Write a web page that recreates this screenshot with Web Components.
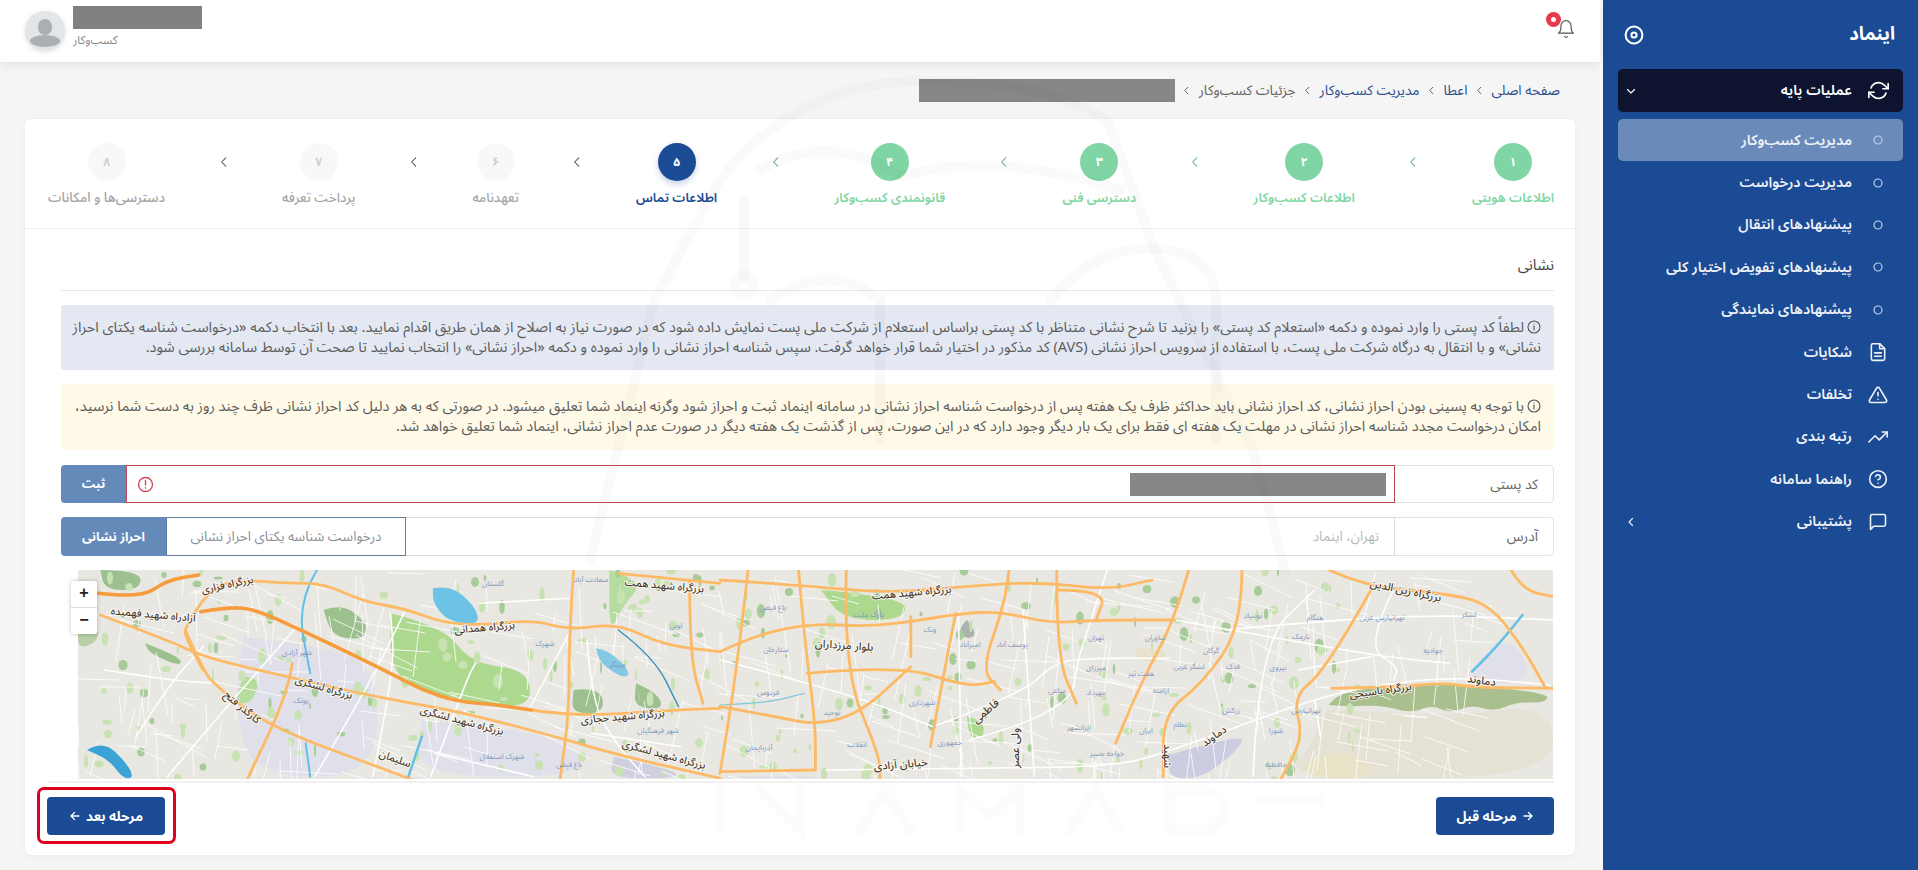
<!DOCTYPE html>
<html lang="fa" dir="rtl">
<head>
<meta charset="utf-8">
<title>اینماد</title>
<style>
  html, body { margin: 0; height: 870px; overflow: hidden; background: #f5f5f5; }
  body { font-family: "Noto Sans Arabic", "Vazirmatn", "DejaVu Sans", sans-serif; font-size: 13px; color: #555; }
</style>
</head>
<body>
<app-shell>
  <side-bar slot="side">
    <side-item icon="refresh" open>عملیات پایه</side-item>
    <side-item icon="dot" active>مدیریت کسب‌وکار</side-item>
    <side-item icon="dot">مدیریت درخواست</side-item>
    <side-item icon="dot">پیشنهادهای انتقال</side-item>
    <side-item icon="dot">پیشنهادهای تفویض اختیار کلی</side-item>
    <side-item icon="dot">پیشنهادهای نمایندگی</side-item>
    <side-item icon="file">شکایات</side-item>
    <side-item icon="warn">تخلفات</side-item>
    <side-item icon="trend">رتبه بندی</side-item>
    <side-item icon="help">راهنما سامانه</side-item>
    <side-item icon="chat" more>پشتیبانی</side-item>
  </side-bar>
  <top-bar></top-bar>
  <crumb-trail></crumb-trail>
  <main-card>
    <step-bar slot="steps">
      <step-item num="۱" state="done">اطلاعات هویتی</step-item>
      <step-item num="۲" state="done">اطلاعات کسب‌وکار</step-item>
      <step-item num="۳" state="done">دسترسی فنی</step-item>
      <step-item num="۴" state="done">قانونمندی کسب‌وکار</step-item>
      <step-item num="۵" state="current">اطلاعات تماس</step-item>
      <step-item num="۶">تعهدنامه</step-item>
      <step-item num="۷">پرداخت تعرفه</step-item>
      <step-item num="۸" last>دسترسی‌ها و امکانات</step-item>
    </step-bar>
    <info-alert kind="info">لطفاً کد پستی را وارد نموده و دکمه «استعلام کد پستی» را بزنید تا شرح نشانی متناظر با کد پستی براساس استعلام از شرکت ملی پست نمایش داده شود که در صورت نیاز به اصلاح از همان طریق اقدام نمایید. بعد با انتخاب دکمه «درخواست شناسه یکتای احراز<br>نشانی» و با انتقال به درگاه شرکت ملی پست، با استفاده از سرویس احراز نشانی (AVS) کد مذکور در اختیار شما قرار خواهد گرفت. سپس شناسه احراز نشانی را وارد نموده و دکمه «احراز نشانی» را انتخاب نمایید تا صحت آن توسط سامانه بررسی شود.</info-alert>
    <info-alert kind="warn">با توجه به پسینی بودن احراز نشانی، کد احراز نشانی باید حداکثر ظرف یک هفته پس از درخواست شناسه احراز نشانی در سامانه اینماد ثبت و احراز شود وگرنه اینماد شما تعلیق میشود. در صورتی که به هر دلیل کد احراز نشانی ظرف چند روز به دست شما نرسید،<br>امکان درخواست مجدد شناسه احراز نشانی در مهلت یک هفته ای فقط برای یک بار دیگر وجود دارد که در این صورت، پس از گذشت یک هفته دیگر در صورت عدم احراز نشانی، اینماد شما تعلیق خواهد شد.</info-alert>
    <form-row label="کد پستی" error redacted>
      <form-btn>ثبت</form-btn>
    </form-row>
    <form-row label="آدرس" value="تهران، اینماد">
      <form-btn outline>درخواست شناسه یکتای احراز نشانی</form-btn>
      <form-btn wide>احراز نشانی</form-btn>
    </form-row>
    <tehran-map></tehran-map>
    <nav-button slot="prev" dir-arrow="right">مرحله قبل</nav-button>
    <nav-button slot="next" dir-arrow="left" marked>مرحله بعد</nav-button>
  </main-card>
  <water-mark slot="over"></water-mark>
</app-shell>

<script>
const ICONS = {
  refresh: '<polyline points="23 4 23 10 17 10"/><polyline points="1 20 1 14 7 14"/><path d="M3.51 9a9 9 0 0 1 14.85-3.36L23 10M1 14l4.64 4.36A9 9 0 0 0 20.49 15"/>',
  file: '<path d="M14 2H6a2 2 0 0 0-2 2v16a2 2 0 0 0 2 2h12a2 2 0 0 0 2-2V8z"/><polyline points="14 2 14 8 20 8"/><line x1="16" y1="13" x2="8" y2="13"/><line x1="16" y1="17" x2="8" y2="17"/>',
  warn: '<path d="M10.29 3.86L1.82 18a2 2 0 0 0 1.71 3h16.94a2 2 0 0 0 1.71-3L13.71 3.86a2 2 0 0 0-3.42 0z"/><line x1="12" y1="9" x2="12" y2="13"/><line x1="12" y1="17" x2="12.01" y2="17"/>',
  trend: '<polyline points="23 6 13.5 15.5 8.5 10.5 1 18"/><polyline points="17 6 23 6 23 12"/>',
  help: '<circle cx="12" cy="12" r="10"/><path d="M9.09 9a3 3 0 0 1 5.83 1c0 2-3 3-3 3"/><line x1="12" y1="17" x2="12.01" y2="17"/>',
  chat: '<path d="M21 15a2 2 0 0 1-2 2H7l-4 4V5a2 2 0 0 1 2-2h14a2 2 0 0 1 2 2z"/>',
  bell: '<path d="M18 8A6 6 0 0 0 6 8c0 7-3 9-3 9h18s-3-2-3-9"/><path d="M13.73 21a2 2 0 0 1-3.46 0"/>'
};
const icon = (name, size, sw = 2) => `<svg width="${size}" height="${size}" viewBox="0 0 24 24" fill="none" stroke="currentColor" stroke-width="${sw}" stroke-linecap="round" stroke-linejoin="round">${ICONS[name]}</svg>`;
const chevron = (dir, size, sw = 2) => `<svg width="${size}" height="${size}" viewBox="0 0 24 24" fill="none" stroke="currentColor" stroke-width="${sw}" stroke-linecap="round" stroke-linejoin="round"><polyline points="${dir === 'left' ? '15 5 8 12 15 19' : dir === 'down' ? '5 9 12 16 19 9' : '9 5 16 12 9 19'}"/></svg>`;

class Base extends HTMLElement {
  constructor() {
    super();
    this.attachShadow({ mode: 'open' });
  }
  connectedCallback() {
    this.shadowRoot.innerHTML = this.render();
  }
}

class AppShell extends Base {
  render() {
    return `<style>
      :host { display: grid; grid-template-columns: 318px 1600px; height: 870px; position: relative; }
      .main { display: flex; flex-direction: column; min-width: 0; height: 870px; }
    </style>
    <slot name="side"></slot>
    <div class="main"><slot></slot></div>
    <slot name="over"></slot>`;
  }
}

class SideBar extends Base {
  render() {
    return `<style>
      :host { display: block; height: 870px; background: #1a4b94; border-left: 3px solid #fbfbfb; box-sizing: border-box; color: #fff; }
      header { display: flex; align-items: center; justify-content: space-between; height: 69px; padding: 0 23px 0 21px; box-sizing: border-box; }
      h1 { margin: 0; font-size: 18.5px; font-weight: 700; }
      nav { display: flex; flex-direction: column; margin: 0 15px 0 15px; }
      svg { display: block; }
    </style>
    <header><h1>اینماد</h1>
      <svg width="20" height="20" viewBox="0 0 20 20" fill="none" stroke="#fff" stroke-width="2"><circle cx="10" cy="10" r="8.4"/><circle cx="10" cy="10" r="2.6"/></svg>
    </header>
    <nav><slot></slot></nav>`;
  }
}

class SideItem extends Base {
  render() {
    const name = this.getAttribute('icon');
    const ic = name === 'dot'
      ? '<svg width="10" height="10" viewBox="0 0 10 10" fill="none" stroke="#bcd0ea" stroke-width="1.2"><circle cx="5" cy="5" r="4"/></svg>'
      : icon(name, name === 'refresh' ? 21 : 20, 1.9);
    let tail = '';
    if (this.hasAttribute('open')) tail = chevron('down', 12, 2.2);
    if (this.hasAttribute('more')) tail = chevron('left', 12, 2.2);
    return `<style>
      :host { display: flex; align-items: center; height: 42.4px; padding: 0 14px 0 7px; box-sizing: border-box; border-radius: 5px; font-size: 14.4px; font-weight: 600; color: #eef2f8; white-space: nowrap; }
      :host([open]) { height: 43px; background: #0e1430; color: #fff; margin-bottom: 7px; }
      :host([active]) { background: #6a8bba; }
      .ic { width: 22px; height: 22px; display: flex; align-items: center; justify-content: center; margin-left: 15px; flex: none; }
      .tail { margin-right: auto; display: flex; }
      svg { display: block; }
    </style>
    <span class="ic">${ic}</span><slot></slot><span class="tail">${tail}</span>`;
  }
}

class TopBar extends Base {
  render() {
    return `<style>
      :host { display: flex; align-items: center; justify-content: space-between; flex: none; height: 62px; background: #fff; box-shadow: 0 2px 10px rgba(0,0,0,.09); padding: 0 24px 0 25px; box-sizing: border-box; position: relative; }
      .bell { position: relative; width: 20px; height: 24px; color: #555; display: flex; margin-top: -2px; }
      .badge { position: absolute; top: -6px; left: -10px; width: 15px; height: 15px; border-radius: 50%; background: #e8394d; }
      .badge::after { content: ""; position: absolute; inset: 5px; background: #fff; border-radius: 50%; }
      .who { display: flex; align-items: center; gap: 8px; direction: ltr; }
      .avatar { width: 40px; height: 40px; border-radius: 50%; background: #e3e6e8; box-shadow: 0 1px 5px rgba(0,0,0,.12); overflow: hidden; }
      .name { width: 129px; height: 23px; background: #7f8280; margin-bottom: 3px; }
      .role { font-size: 11.5px; color: #888; direction: rtl; text-align: left; line-height: 16px; height: 16px; }
      .txt { margin-top: -9px; }
    </style>
    <div class="bell">${icon('bell', 22, 1.4)}<span class="badge"></span></div>
    <div class="who">
      <div class="avatar"><svg width="40" height="40" viewBox="0 0 40 40" fill="#a9afb2"><rect x="13" y="8" width="14" height="16" rx="7"/><ellipse cx="20" cy="30" rx="15" ry="6"/></svg></div>
      <div class="txt"><div class="name"></div><div class="role">کسب‌وکار</div></div>
    </div>`;
  }
}

class CrumbTrail extends Base {
  render() {
    const sep = `<span class="sep">${chevron('left', 11, 2)}</span>`;
    return `<style>
      :host { display: flex; align-items: center; flex: none; height: 57px; padding: 0 40px 0 0; box-sizing: border-box; font-size: 13.8px; color: #2a4f8f; white-space: nowrap; }
      .sep { margin: 0 6.5px; color: #555; display: flex; }
      .cur { color: #666; }
      .bar { width: 256px; height: 23px; background: #858886; }
    </style>
    <span>صفحه اصلی</span>${sep}<span>اعطا</span>${sep}<span>مدیریت کسب‌وکار</span>${sep}<span class="cur">جزئیات کسب‌وکار</span>${sep}<span class="bar"></span>`;
  }
}

class MainCard extends Base {
  render() {
    return `<style>
      :host { display: block; flex: none; width: 1550px; height: 736px; margin: 0 25px; background: #fff; border-radius: 6px; box-shadow: 0 1px 6px rgba(0,0,0,.05); }
      .body { padding: 0 21px 0 21px; }
      .title { height: 62px; line-height: 72px; margin: 0 0 14px 15px; border-bottom: 1px solid #e8e8e8; font-size: 15px; color: #444; box-sizing: border-box; }
      .content { margin-left: 15px; display: flex; flex-direction: column; }
      .foot { display: flex; justify-content: space-between; margin-top: 2px; border-top: 2px solid #f1f1f1; padding-top: 14px; margin-left: 1px; }
    </style>
    <slot name="steps"></slot>
    <div class="body">
      <div class="title">نشانی</div>
      <div class="content"><slot></slot></div>
      <div class="foot"><slot name="prev"></slot><slot name="next"></slot></div>
    </div>`;
  }
}

class StepBar extends Base {
  render() {
    return `<style>
      :host { display: flex; justify-content: space-between; height: 110px; padding: 24px 21px 0 23px; box-sizing: border-box; border-bottom: 1px solid #f0f0f0; }
    </style>
    <slot></slot>`;
  }
}

class StepItem extends Base {
  render() {
    return `<style>
      :host { display: contents; }
      .step { display: flex; flex-direction: column; align-items: center; white-space: nowrap; }
      .num { width: 38px; height: 38px; border-radius: 50%; display: flex; align-items: center; justify-content: center; font-size: 12px; font-weight: 700; background: #f8f8f8; color: #cfcfcf; }
      .lab { margin-top: 7px; font-size: 13.1px; line-height: 20px; color: #a4a4a4; font-weight: 500; }
      :host([last]) .lab { font-size: 13.4px; }
      .done .num { background: #7fd6a4; color: #fff; }
      .done .lab { color: #7fd6a4; font-weight: 600; font-size: 12.9px; }
      .current .num { background: #1a4b94; color: #fff; box-shadow: 0 3px 6px rgba(26,75,148,.25); }
      .current .lab { color: #1a4b94; font-weight: 600; font-size: 12.9px; }
      .chev { display: flex; align-items: center; height: 38px; color: #555; }
      .chev.done { color: #62b096; }
    </style>
    <div class="step ${this.getAttribute('state') || ''}">
      <div class="num">${this.getAttribute('num')}</div>
      <div class="lab"><slot></slot></div>
    </div>
    ${this.hasAttribute('last') ? '' : `<div class="chev ${this.getAttribute('state') === 'done' ? 'done' : ''}">${chevron('left', 14, 1.8)}</div>`}`;
  }
}

class InfoAlert extends Base {
  render() {
    return `<style>
      :host { display: block; box-sizing: border-box; height: 65px; padding: 12.5px 13px 0 5px; margin-bottom: 14px; border-radius: 3px; font-size: 14.5px; line-height: 20px; color: #5c5c5c; white-space: nowrap; overflow: hidden; }
      :host([kind=info]) { background: #e3e8f2; }
      :host([kind=warn]) { background: #fff9e8; height: 66px; margin-bottom: 15px; }
      .i { display: inline-block; vertical-align: -2px; margin-left: 3px; color: #555; line-height: 0; }
    </style>
    <span class="i"><svg width="14" height="14" viewBox="0 0 14 14" fill="none" stroke="currentColor" stroke-width="1.1" stroke-linecap="round"><circle cx="7" cy="7" r="6"/><line x1="7" y1="6.2" x2="7" y2="10"/><line x1="7" y1="4" x2="7" y2="4.1"/></svg></span><slot></slot>`;
  }
}

class FormRow extends Base {
  render() {
    const err = this.hasAttribute('error');
    return `<style>
      :host { display: flex; height: 39px; margin-bottom: 14px; font-size: 13.8px; }
      :host([error]) { height: 38px; }
      .lab { width: 159px; flex: none; box-sizing: border-box; padding-right: 15px; display: flex; align-items: center; border: 1px solid #e4e4e4; border-left: none; border-radius: 0 4px 4px 0; color: #666; }
      .input { flex: 1; min-width: 0; display: flex; align-items: center; box-sizing: border-box; border: 1px solid #dcdcdc; border-left: none; padding-right: 15px; color: #b8b8b8; font-size: 13.5px; position: relative; }
      :host([error]) .input { border: 1px solid #c4485a; padding-right: 8px; }
      .bar { width: 256px; height: 23px; background: #858886; }
      .alert { margin-right: auto; margin-left: 10px; display: flex; color: #cf4a5c; }
      .btns { display: flex; flex: none; }
    </style>
    <div class="lab">${this.getAttribute('label')}</div>
    <div class="input">
      ${this.hasAttribute('redacted') ? '<span class="bar"></span>' : ''}${this.getAttribute('value') || ''}
      ${err ? `<span class="alert"><svg width="17" height="17" viewBox="0 0 17 17" fill="none" stroke="currentColor" stroke-width="1.4" stroke-linecap="round"><circle cx="8.5" cy="8.5" r="7"/><line x1="8.5" y1="4.6" x2="8.5" y2="9"/><line x1="8.5" y1="11.8" x2="8.5" y2="12"/></svg></span>` : ''}
    </div>
    <div class="btns"><slot></slot></div>`;
  }
}

class FormBtn extends Base {
  render() {
    return `<style>
      :host { display: flex; align-items: center; justify-content: center; width: 65px; box-sizing: border-box; background: #648aba; color: #fff; font-weight: 700; font-size: 12.5px; border-radius: 4px 0 0 4px; white-space: nowrap; }
      :host([wide]) { width: 105px; }
      :host([outline]) { width: 240px; background: #fff; color: #8a8f96; font-weight: 400; font-size: 13.5px; border: 1px solid #5f7f9e; border-radius: 0; }
    </style><slot></slot>`;
  }
}

class NavButton extends Base {
  render() {
    const left = this.getAttribute('dir-arrow') === 'left';
    const arrow = `<svg width="12" height="12" viewBox="0 0 12 12" fill="none" stroke="currentColor" stroke-width="1.3" stroke-linecap="round" stroke-linejoin="round"><path d="${left ? 'M10 6H2M5.5 2.5L2 6l3.5 3.5' : 'M2 6h8M6.5 2.5L10 6 6.5 9.5'}"/></svg>`;
    return `<style>
      :host { display: flex; position: relative; width: 118px; height: 38px; margin-bottom: 12px; }
      .b { flex: 1; display: flex; align-items: center; justify-content: center; gap: 5px; background: #1a4b94; color: #fff; font-weight: 700; font-size: 13.5px; border-radius: 4px; white-space: nowrap; }
      :host([marked])::after { content: ""; position: absolute; inset: -10px -11px -9px -10px; border: 3px solid #e1001c; border-radius: 7px; }
    </style>
    <div class="b">${left ? '' : arrow}<slot></slot>${left ? arrow : ''}</div>`;
  }
}

class TehranMap extends Base {
  render() {
    const A = pts => pts.map(([x, y]) => [x / 2.24 - 58, y / 3]);
    const B = pts => pts.map(([x, y]) => [x / 1.782 + 642, y / 3]);
    const smooth = p => {
      let d = `M${p[0][0].toFixed(1)} ${p[0][1].toFixed(1)}`;
      for (let i = 1; i < p.length - 1; i++) {
        const mx = (p[i][0] + p[i + 1][0]) / 2, my = (p[i][1] + p[i + 1][1]) / 2;
        d += `Q${p[i][0].toFixed(1)} ${p[i][1].toFixed(1)} ${mx.toFixed(1)} ${my.toFixed(1)}`;
      }
      const l = p[p.length - 1];
      return d + `L${l[0].toFixed(1)} ${l[1].toFixed(1)}`;
    };
    const line = (p, c, w) => `<path d="${smooth(p)}" fill="none" stroke="${c}" stroke-width="${w}" stroke-linecap="round"/>`;
    const area = (p, c) => `<path d="${smooth([...p, p[0]])}Z" fill="${c}"/>`;

    // thin street grid and small parks, scattered with a fixed seed
    let r = 7;
    const rnd = () => (r = (r * 16807) % 2147483647) / 2147483647;
    let grid = '';
    for (let i = 0; i < 420; i++) {
      const x = rnd() * 1400, y = rnd() * 209, a = (i % 2 ? 0.25 : 1.6) + (rnd() - .5) * .5, l = 15 + rnd() * 55;
      grid += `<line x1="${x.toFixed(0)}" y1="${y.toFixed(0)}" x2="${(x + Math.cos(a) * l).toFixed(0)}" y2="${(y + Math.sin(a) * l).toFixed(0)}"/>`;
    }
    let blobs = '';
    for (let i = 0; i < 260; i++) {
      const x = rnd() * 1290, y = rnd() * 209, w = 1 + rnd() * 4, h = 1.5 + rnd() * 6;
      blobs += `<ellipse cx="${x.toFixed(0)}" cy="${y.toFixed(0)}" rx="${w.toFixed(1)}" ry="${h.toFixed(1)}" fill="${i % 3 ? '#c9e2b4' : '#a8cb9a'}"/>`;
    }

    const lav = '#e0e0ea', green = '#add98f', dark = '#9cc08e', water = '#62bfe6';
    const areas = [
      area(A([[500, 200], [700, 230], [800, 300], [800, 620], [520, 620], [480, 400]]), lav),
      area(A([[900, 450], [1200, 480], [1300, 620], [880, 620]]), lav),
      area(A([[1330, 560], [1470, 600], [1470, 625], [1320, 625]]), '#cfcfe0'),
      area(A([[130, 180], [180, 170], [170, 220], [130, 235]]), '#b8cfa8'),
      area(A([[180, 0], [270, 0], [270, 60], [190, 60]]), dark),
      area(A([[280, 220], [360, 260], [360, 290], [290, 250]]), dark),
      area(A([[680, 120], [720, 100], [780, 160], [770, 210], [700, 200]]), dark),
      area(A([[830, 130], [950, 170], [1010, 280], [1140, 300], [1145, 420], [980, 390], [880, 350], [830, 290]]), green),
      area(A([[1240, 360], [1300, 350], [1310, 430], [1235, 430]]), dark),
      area(A([[1380, 340], [1430, 370], [1440, 420], [1375, 410]]), dark),
      area(A([[1320, 0], [1400, 30], [1350, 110], [1320, 190]]), '#b7dca0'),
      area(A([[500, 320], [540, 320], [520, 400], [480, 400]]), '#b5dc9c'),
      area(B([[180, 60], [330, 80], [330, 150], [220, 150]]), green),
      area(B([[440, 150], [460, 190], [440, 210], [425, 180]]), '#aab2ae'),
      area(B([[800, 555], [930, 490], [930, 530], [860, 625], [800, 625]]), '#cdcde2'),
      area(B([[1070, 420], [1120, 420], [1300, 440], [1485, 400], [1485, 625], [1000, 625], [1060, 520]]), '#e5e1d4'),
      area(B([[1085, 405], [1100, 365], [1200, 350], [1290, 340], [1478, 368], [1470, 400], [1420, 395], [1380, 425], [1340, 405], [1300, 430], [1270, 405], [1230, 430], [1180, 405], [1120, 410]]), '#a9c08e'),
      area(B([[1050, 570], [1130, 530], [1170, 625], [1040, 625]]), '#e8e3c6'),
      area(B([[740, 235], [800, 235], [790, 280], [745, 270]]), '#e7e2cb'),
      area(B([[1380, 220], [1420, 210], [1450, 340], [1320, 340]]), lav),
      area(B([[440, 440], [470, 450], [470, 505], [445, 505]]), green),
      area(B([[0, 620], [190, 615], [160, 625], [0, 625]]), lav)
    ].join('');

    const waters = [
      area(A([[925, 55], [965, 45], [1020, 110], [1030, 165], [960, 155], [925, 100]]), '#6cc3e6'),
      area(A([[1290, 235], [1320, 240], [1370, 310], [1350, 325], [1300, 280]]), '#83c8e4'),
      area(A([[150, 540], [185, 510], [240, 580], [255, 625], [230, 625], [200, 570]]), '#3ca3d6'),
      line(A([[665, 0], [620, 100], [650, 310]]), water, 2),
      line(A([[900, 500], [870, 620]]), water, 2.5),
      line(A([[1340, 180], [1420, 260], [1475, 410]]), '#3f93bd', 1.5),
      line(A([[640, 520], [650, 620]]), water, 2),
      line(B([[1430, 135], [1390, 220], [1340, 305]]), water, 2.5),
      line(B([[0, 405], [80, 400], [150, 370]]), '#7fc7dd', 1.2)
    ].join('');

    const whites = [
      A([[190, 300], [330, 330], [440, 340]]), A([[260, 500], [330, 350], [410, 230]]),
      A([[330, 620], [470, 400], [620, 170]]), A([[660, 620], [780, 350], [860, 130]]),
      A([[790, 620], [840, 300], [830, 130]]), A([[920, 620], [1000, 330], [1020, 280]]),
      A([[930, 550], [1150, 620]]), A([[1030, 100], [1230, 85]]), A([[1140, 420], [1230, 190]]),
      A([[1270, 210], [1280, 400], [1340, 530], [1400, 620]]), A([[1280, 490], [1480, 530]]),
      B([[190, 600], [450, 595], [700, 590], [800, 545], [1060, 385], [1170, 345], [1310, 320], [1480, 345]]),
      B([[380, 470], [540, 370], [590, 285], [640, 265], [800, 265]]), B([[445, 510], [620, 430], [640, 265]]),
      B([[810, 150], [960, 195], [1180, 260], [1300, 280]]), B([[1030, 300], [1160, 260]]),
      B([[950, 620], [960, 220], [1060, 60]]), B([[1070, 500], [1060, 390]]),
      B([[1200, 60], [1150, 230], [1210, 290], [1200, 330]]), B([[900, 180], [1200, 130], [1485, 150]]),
      B([[425, 130], [430, 620]]), B([[540, 120], [560, 620]]), B([[690, 0], [640, 260]]),
      B([[0, 270], [230, 370], [380, 470]])
    ].map(p => line(p, '#fff', 1.6)).join('');

    const o = '#fdba66';
    const roads = [
      A([[180, 135], [330, 210], [420, 265], [600, 320], [760, 370], [880, 400], [1000, 430], [1200, 500], [1340, 555], [1568, 625]]),
      A([[370, 180], [410, 300], [440, 350], [560, 470], [800, 590], [880, 630]]),
      A([[400, 110], [370, 170], [370, 200], [410, 300]]),
      A([[400, 110], [430, 50], [500, 30], [600, 40], [680, 40], [770, 95], [860, 115], [950, 160], [1040, 165], [1150, 150], [1230, 180], [1340, 160], [1440, 225], [1568, 245]]),
      A([[1145, 420], [1240, 440], [1470, 420], [1568, 415]]),
      A([[1240, 0], [1230, 200], [1230, 430], [1210, 625]]),
      A([[610, 280], [600, 370], [510, 625]]),
      A([[1500, 30], [1500, 260], [1530, 400]]),
      A([[1340, 10], [1568, 40]]),
      B([[0, 245], [70, 190], [170, 160], [260, 170], [340, 155], [430, 130], [500, 125], [590, 160], [670, 150], [810, 150]]),
      B([[0, 30], [140, 45], [300, 70], [430, 50], [570, 35], [690, 60], [770, 30]]),
      B([[0, 410], [100, 440], [170, 465], [250, 430], [340, 290]]),
      B([[140, 0], [150, 200], [170, 460], [170, 600]]), B([[50, 0], [30, 300], [0, 610]]),
      B([[225, 0], [220, 300], [285, 560], [285, 625]]), B([[340, 140], [340, 260]]),
      B([[155, 310], [320, 285], [440, 350], [490, 335]]),
      B([[420, 130], [400, 300], [375, 530]]), B([[515, 0], [510, 90], [465, 300], [500, 360]]),
      B([[600, 0], [600, 260], [635, 400]]), B([[835, 0], [810, 150], [750, 340], [705, 520]]),
      B([[930, 0], [930, 170], [860, 340], [790, 430], [790, 620]]),
      B([[1160, 60], [1080, 300], [1020, 380], [1040, 500], [1000, 625]]),
      B([[1085, 0], [1150, 50], [1290, 70], [1370, 100], [1430, 230], [1470, 350]]),
      B([[1410, 0], [1430, 60], [1485, 80]]),
      B([[1090, 355], [1200, 352], [1290, 338], [1340, 352], [1485, 355]]),
      B([[0, 605], [170, 600]]), B([[600, 60], [690, 60], [670, 150]])
    ].map(p => line(p, o, 2.8)).join('');
    const thick = [
      A([[175, 70], [270, 85], [330, 30], [400, 15]]),
      A([[405, 125], [470, 110], [530, 120], [620, 175], [700, 225], [830, 310], [900, 360], [980, 395], [1060, 403], [1145, 420]])
    ].map(p => line(p, '#f79c3d', 3.6)).join('');

    const big = (t, x, y, a, s = 10.5) => `<text x="${x}" y="${y}" transform="rotate(${a} ${x} ${y})" font-size="${s}" class="big">${t}</text>`;
    const labels = [
      big('آزادراه شهید فهمیده', 75, 48, 5), big('بزرگراه همدانی', 407, 61, -5), big('بزرگراه لشگری', 245, 121, 16),
      big('بزرگراه شهید لشگری', 383, 154, 15), big('بزرگراه شهید حجازی', 545, 150, -5), big('بزرگراه شهید لشگری', 585, 188, 15),
      big('کارگذر فتح', 162, 140, 40), big('سلیمان', 316, 192, 20), big('بزرگراه شهید همت', 586, 19, 5),
      big('بزرگراه فزاری', 150, 18, -12), big('بزرگراه شهید همت', 834, 26, -5), big('بلوار مرزداران', 766, 79, 4, 11),
      big('فاطمی', 910, 144, -40, 11), big('ولی عصر', 941, 178, -90, 11), big('خیابان آزادی', 823, 198, -5, 11),
      big('دماوند', 1138, 169, -35), big('بزرگراه باسیجی', 1303, 124, -8), big('دماوند', 1403, 114, 8, 11),
      big('بزرگراه زین الدین', 1327, 24, 12, 11), big('شهید', 1086, 186, 90)
    ].join('');
    const small = [
      ['A', 1060, 48, 'گلستان'], ['A', 620, 255, 'شهر آزادی'], ['A', 630, 400, 'پونک'], ['A', 1280, 36, 'سعادت آباد'], ['A', 1175, 228, 'شهرک'],
      ['A', 1470, 175, 'اوین'], ['A', 1340, 290, 'چیتگر'], ['A', 1430, 490, 'شهر فرهنگیان'], ['A', 1080, 568, 'شهرک استقلال'], ['A', 1230, 590, 'باغ فیض'],
      ['B', 95, 120, 'باغ فیض'], ['B', 85, 375, 'فردوس'], ['B', 100, 245, 'ستارخان'], ['B', 265, 140, 'پارک ملت'], ['B', 375, 185, 'ونک'],
      ['B', 445, 232, 'امیرآباد'], ['B', 520, 230, 'یوسف آباد'], ['B', 670, 210, 'تهران'], ['B', 775, 210, 'نیاوران'], ['B', 950, 145, 'نوبنیاد'],
      ['B', 1060, 150, 'هنگام'], ['B', 1180, 150, 'تهرانپارس غربی'], ['B', 1035, 207, 'نارمک'], ['B', 875, 250, 'گرگان'], ['B', 835, 298, 'لشگر غربی'],
      ['B', 915, 298, 'فدک'], ['B', 995, 300, 'نیروی'], ['B', 670, 300, 'میرزای'], ['B', 750, 318, 'هفت تیر'], ['B', 600, 368, 'ساعی'],
      ['B', 670, 375, 'مهرداد'], ['B', 785, 370, 'ارامنه'], ['B', 910, 428, 'زرکش'], ['B', 1045, 428, 'تهرانپارس'], ['B', 1270, 250, 'جوادیه'],
      ['B', 1335, 140, 'لشکر'], ['B', 360, 405, 'شهرداری'], ['B', 200, 435, 'توحید'], ['B', 410, 525, 'جمهوری'], ['B', 245, 530, 'انقلاب'],
      ['B', 70, 540, 'آذربایجان'], ['B', 690, 558, 'خواجه نصیر'], ['B', 640, 480, 'ایرانشهر'], ['B', 760, 490, 'ایران'], ['B', 820, 470, 'نظام'],
      ['B', 990, 490, 'شورا'], ['B', 990, 590, 'حافظیه']
    ].map(([k, x, y, t]) => {
      const [[mx, my]] = (k === 'A' ? A : B)([[x, y]]);
      return `<text x="${mx.toFixed(0)}" y="${my.toFixed(0)}" class="small">${t}</text>`;
    }).join('');

    return `<style>
      :host { display: block; position: relative; height: 209px; margin-left: -1px; margin-right: 1px; }
      svg.map { display: block; width: 1475px; height: 209px; margin-right: 0; margin-left: auto; background: #e9e7e1; }
      .grid line { stroke: #fff; stroke-width: .9; opacity: .9; }
      .big { text-anchor: middle; fill: #4a3a2a; stroke: #fff; stroke-width: 2px; stroke-opacity: .75; paint-order: stroke; direction: rtl; font-weight: 500; }
      .small { text-anchor: middle; fill: #8296c2; font-size: 7.5px; direction: rtl; }
      .zoom { position: absolute; left: 11px; top: 11px; width: 26px; background: #fff; box-shadow: 0 0 4px rgba(0,0,0,.25); border-radius: 2px; direction: ltr; font-family: "Liberation Sans", sans-serif; }
      .zoom div { height: 26px; line-height: 24px; text-align: center; font-size: 16px; font-weight: 700; color: #222; }
      .zoom div + div { border-top: 1px solid #ddd; }
    </style>
    <svg class="map" viewBox="0 0 1475 209" xmlns="http://www.w3.org/2000/svg" dir="ltr">
      ${areas}${blobs}<g class="grid">${grid}</g>${whites}${waters}${roads}${thick}${small}${labels}
    </svg>
    <div class="zoom"><div>+</div><div>−</div></div>`;
  }
}

class WaterMark extends Base {
  render() {
    return `<style>
      :host { position: absolute; left: 0; top: 0; width: 1600px; height: 870px; pointer-events: none; direction: ltr; }
      svg { display: block; }
      g { fill: none; stroke: #000; stroke-opacity: .018; stroke-width: 10; stroke-linecap: round; }
      .low { stroke-opacity: .012; }
    </style>
    <svg width="1600" height="870" viewBox="0 0 1600 870"><g>
      <path d="M590 560L654 300L720 180Q790 90 900 82Q1040 75 1108 122L1156 253L1253 450L1285 570"/>
      <path d="M760 170Q830 130 900 176Q1000 150 1120 190"/>
      <path d="M744 200V280"/><circle cx="744" cy="285" r="10"/>
      <path d="M1050 300Q1100 240 1170 250Q1216 260 1216 300L1216 440"/>
      <path d="M770 300Q830 260 880 300V440"/>
      <path class="low" d="M720 790V830M760 790L800 830V790M860 830L885 790L910 830M960 830V790L990 815L1020 790V830M1070 830L1095 790L1120 830M1170 790V830H1210Q1240 810 1210 790H1170M1260 800H1320"/>
    </g></svg>`;
  }
}

customElements.define('app-shell', AppShell);
customElements.define('side-bar', SideBar);
customElements.define('side-item', SideItem);
customElements.define('top-bar', TopBar);
customElements.define('crumb-trail', CrumbTrail);
customElements.define('main-card', MainCard);
customElements.define('step-bar', StepBar);
customElements.define('step-item', StepItem);
customElements.define('info-alert', InfoAlert);
customElements.define('form-row', FormRow);
customElements.define('form-btn', FormBtn);
customElements.define('nav-button', NavButton);
customElements.define('tehran-map', TehranMap);
customElements.define('water-mark', WaterMark);
</script>
</body>
</html>
